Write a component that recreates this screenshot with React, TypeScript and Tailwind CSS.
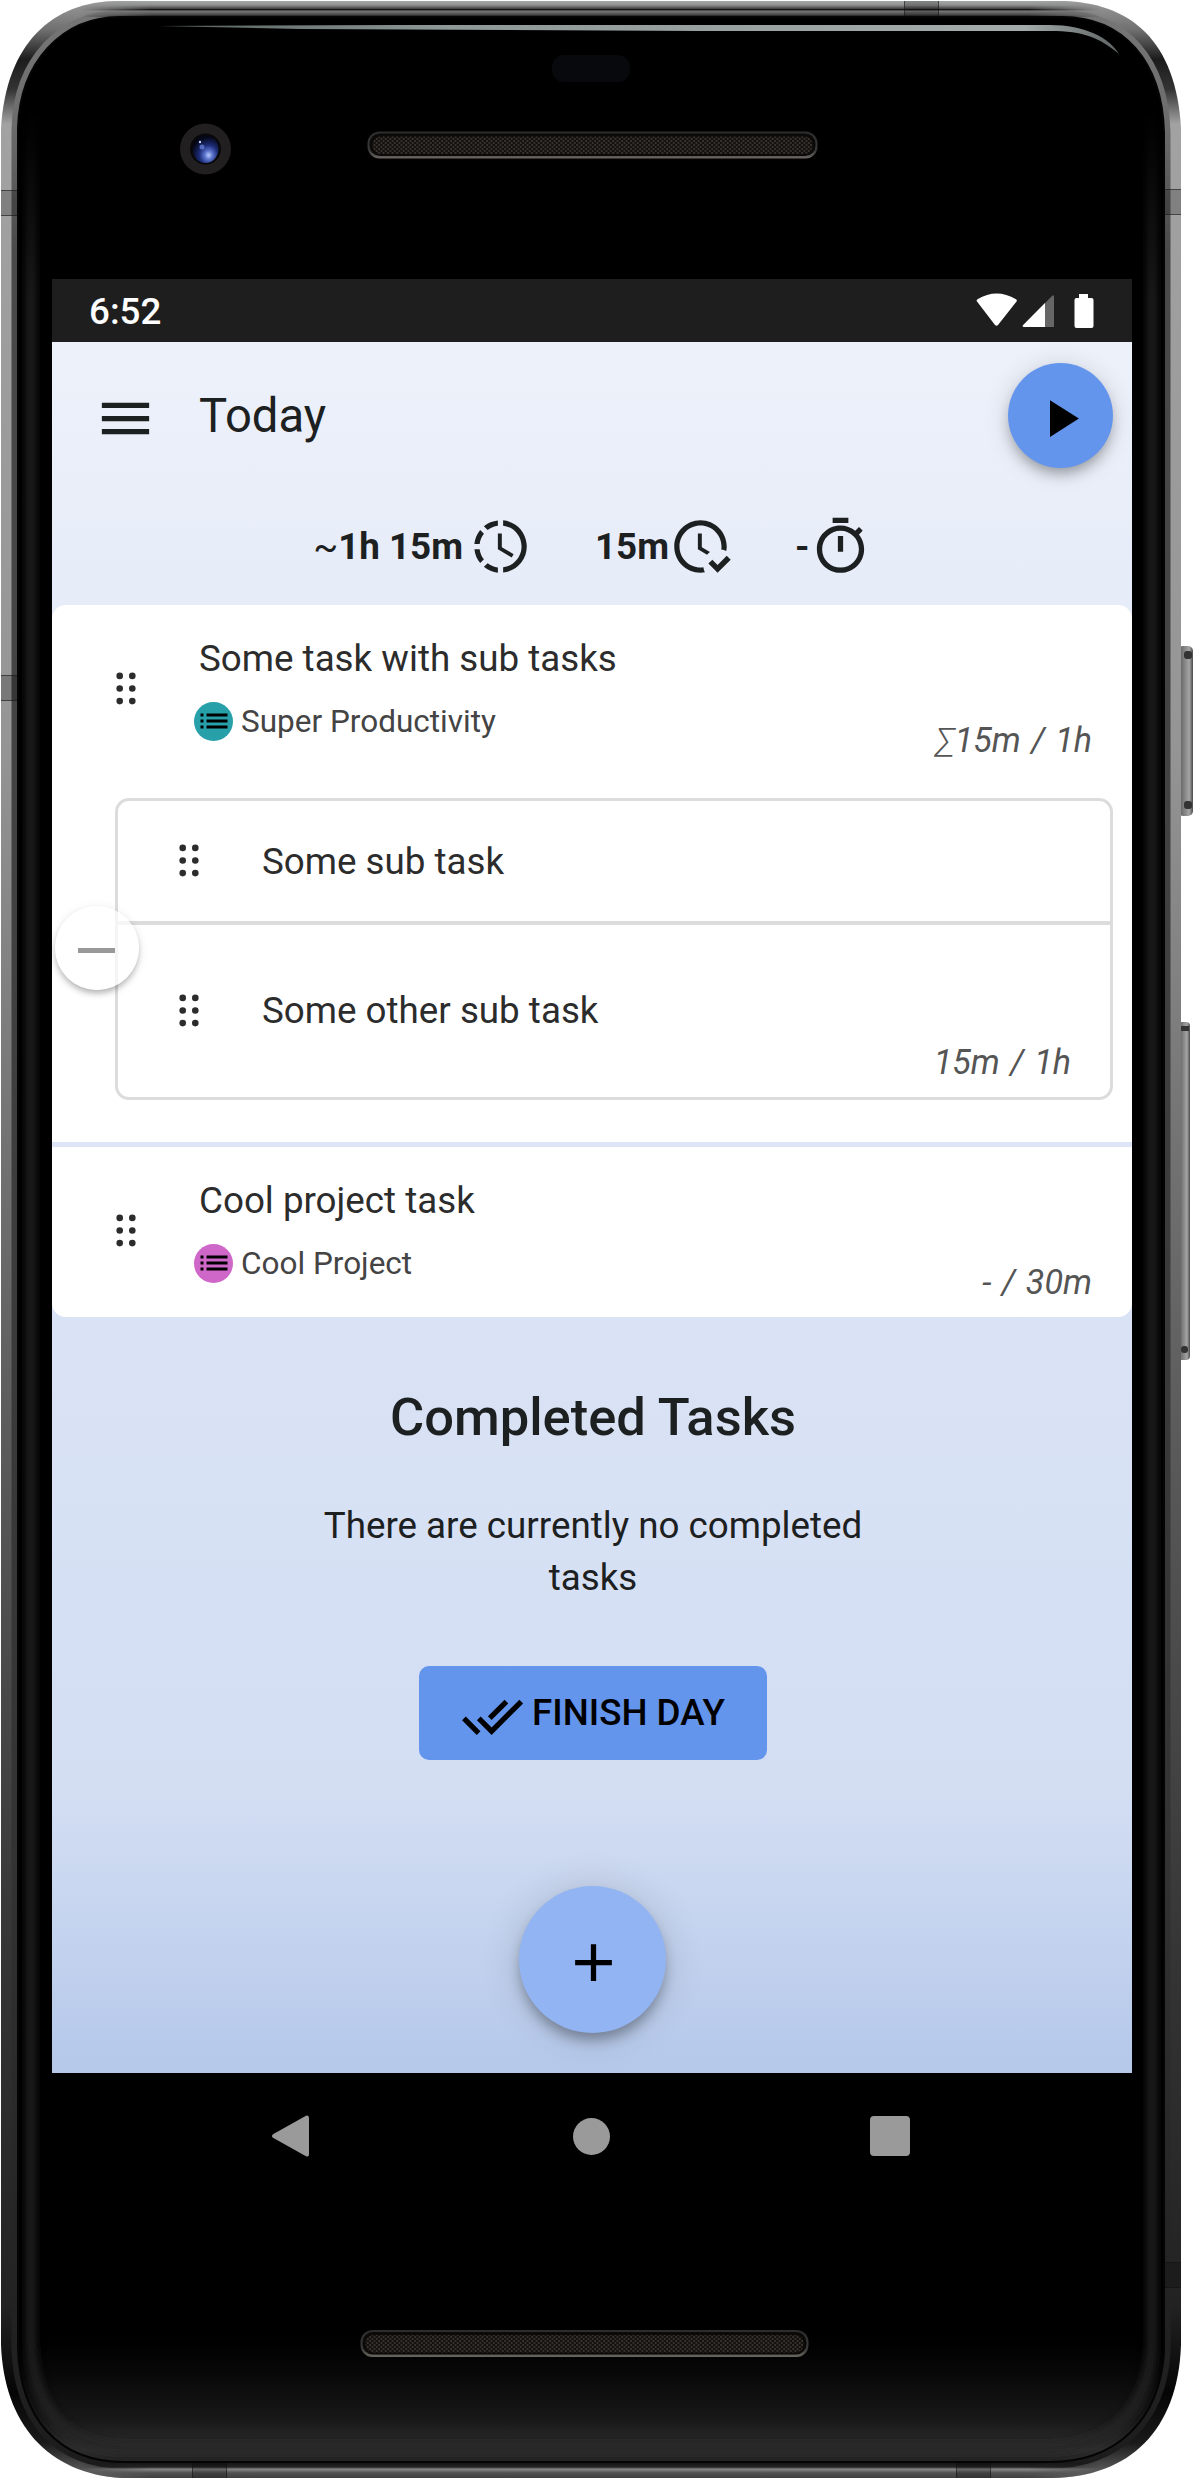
import React from "react";

const FRAME =
  "M118 1H1058C1132 1 1176 42 1181 128V2345C1178 2430 1130 2477 1052 2478H122C48 2474 4 2424 1 2345V128C6 44 52 1 118 1Z";
const GLASS =
  "M120 17H1062C1124 17 1162 62 1164 132V2352C1160 2420 1116 2462 1050 2462H124C58 2462 20 2418 18 2348V128C20 62 62 17 120 17Z";
const GLOW =
  "M122 30H1060C1116 30 1150 70 1152 134V2346C1148 2410 1110 2448 1048 2448H126C66 2448 34 2410 31 2344V134C34 72 68 30 122 30Z";

function Speaker({ y, x, w }: { y: number; x: number; w: number }) {
  return (
    <g>
      <rect x={x} y={y} width={w} height="27" rx="12" fill="url(#slotEdge)" />
      <rect x={x + 2} y={y + 2} width={w - 4} height="22.5" rx="10.5" fill="#0b0a09" />
      <rect x={x + 5} y={y + 5} width={w - 10} height="17.5" rx="8" fill="url(#mesh)" />
    </g>
  );
}

/* Decorative phone body drawn behind the screen. */
function PhoneBody() {
  return (
    <svg className="absolute inset-0" width="1194" height="2480" viewBox="0 0 1194 2480" aria-hidden="true">
      <defs>
        <linearGradient id="metal" x1="0" y1="0" x2="0" y2="2480" gradientUnits="userSpaceOnUse">
          <stop offset="0" stopColor="#9b9b9b" />
          <stop offset="0.012" stopColor="#707070" />
          <stop offset="0.024" stopColor="#1c1c1c" />
          <stop offset="0.036" stopColor="#333333" />
          <stop offset="0.05" stopColor="#a2a2a2" />
          <stop offset="0.3" stopColor="#959595" />
          <stop offset="0.55" stopColor="#606060" />
          <stop offset="0.8" stopColor="#333333" />
          <stop offset="0.93" stopColor="#222222" />
          <stop offset="0.965" stopColor="#050505" />
          <stop offset="0.985" stopColor="#1a1a1a" />
          <stop offset="1" stopColor="#6c6c6c" />
        </linearGradient>
        <linearGradient id="topMetal" x1="0" y1="0" x2="0" y2="17" gradientUnits="userSpaceOnUse">
          <stop offset="0" stopColor="#a8b0ae" />
          <stop offset="0.3" stopColor="#8f8f8f" />
          <stop offset="0.5" stopColor="#444444" />
          <stop offset="0.56" stopColor="#151515" />
          <stop offset="0.66" stopColor="#777777" />
          <stop offset="0.85" stopColor="#4b4b4b" />
          <stop offset="1" stopColor="#050505" />
        </linearGradient>
        <linearGradient id="bottomMetal" x1="0" y1="2462" x2="0" y2="2479" gradientUnits="userSpaceOnUse">
          <stop offset="0" stopColor="#111111" />
          <stop offset="0.3" stopColor="#252525" />
          <stop offset="0.42" stopColor="#888888" />
          <stop offset="0.65" stopColor="#505050" />
          <stop offset="1" stopColor="#3e3e3e" />
        </linearGradient>
        <linearGradient id="innerRim" x1="0" y1="0" x2="0" y2="2480" gradientUnits="userSpaceOnUse">
          <stop offset="0" stopColor="#777777" />
          <stop offset="0.05" stopColor="#6c6c6c" />
          <stop offset="0.1" stopColor="#4a4a4a" />
          <stop offset="0.75" stopColor="#333333" />
          <stop offset="1" stopColor="#1c1c1c" />
        </linearGradient>
        <linearGradient id="glassFill" x1="0" y1="2340" x2="0" y2="2462" gradientUnits="userSpaceOnUse">
          <stop offset="0" stopColor="#000000" />
          <stop offset="0.25" stopColor="#070707" />
          <stop offset="0.65" stopColor="#181818" />
          <stop offset="0.9" stopColor="#2e2e2e" />
          <stop offset="1" stopColor="#232323" />
        </linearGradient>
        <linearGradient id="slotEdge" x1="0" y1="0" x2="0" y2="1">
          <stop offset="0" stopColor="#2c2c2c" />
          <stop offset="0.7" stopColor="#3a3938" />
          <stop offset="1" stopColor="#6b6761" />
        </linearGradient>
        <pattern id="mesh" width="4.5" height="4" patternUnits="userSpaceOnUse">
          <rect width="4.5" height="4" fill="#13100e" />
          <rect x="0.3" y="0.3" width="1.6" height="1.4" fill="#4e4942" />
          <rect x="2.5" y="2.3" width="1.6" height="1.4" fill="#4e4942" />
        </pattern>
        <linearGradient id="shine" x1="160" y1="0" x2="1120" y2="0" gradientUnits="userSpaceOnUse">
          <stop offset="0" stopColor="#56605f" />
          <stop offset="0.3" stopColor="#8e9896" />
          <stop offset="0.9" stopColor="#a3acab" />
          <stop offset="1" stopColor="#5d6262" />
        </linearGradient>
        <linearGradient id="key" x1="0" y1="0" x2="1" y2="0">
          <stop offset="0" stopColor="#555555" />
          <stop offset="0.4" stopColor="#808080" />
          <stop offset="0.75" stopColor="#a5a5a5" />
          <stop offset="1" stopColor="#4a4a4a" />
        </linearGradient>
        <radialGradient id="lens" cx="0.62" cy="0.72" r="0.65">
          <stop offset="0" stopColor="#b9c9ff" />
          <stop offset="0.25" stopColor="#5870c8" />
          <stop offset="0.55" stopColor="#1c2c78" />
          <stop offset="1" stopColor="#050716" />
        </radialGradient>
        <linearGradient id="railFade" x1="80" y1="0" x2="1100" y2="0" gradientUnits="userSpaceOnUse">
          <stop offset="0" stopColor="#000000" />
          <stop offset="0.07" stopColor="#ffffff" />
          <stop offset="0.93" stopColor="#ffffff" />
          <stop offset="1" stopColor="#000000" />
        </linearGradient>
        <linearGradient id="glowFade" x1="0" y1="110" x2="0" y2="300" gradientUnits="userSpaceOnUse">
          <stop offset="0" stopColor="#000000" />
          <stop offset="1" stopColor="#ffffff" />
        </linearGradient>
        <mask id="railMask" maskUnits="userSpaceOnUse" x="0" y="0" width="1194" height="2480">
          <rect width="1194" height="2480" fill="url(#railFade)" />
        </mask>
        <mask id="glowMask" maskUnits="userSpaceOnUse" x="0" y="0" width="1194" height="2480">
          <rect width="1194" height="2480" fill="url(#glowFade)" />
        </mask>
        <clipPath id="frameClip">
          <path d={FRAME} />
        </clipPath>
        <filter id="soft" filterUnits="userSpaceOnUse" x="0" y="0" width="1194" height="2480">
          <feGaussianBlur stdDeviation="4" />
        </filter>
      </defs>
      <rect x="1178" y="646" width="15" height="170" rx="5" fill="url(#key)" />
      <rect x="1184" y="651" width="8" height="8" rx="3" fill="#333333" />
      <rect x="1184" y="801" width="8" height="8" rx="3" fill="#333333" />
      <rect x="1178" y="1022" width="12" height="338" rx="4" fill="url(#key)" />
      <rect x="1181" y="1026" width="8" height="5" fill="#333333" />
      <rect x="1181" y="1346" width="7" height="7" rx="3" fill="#333333" />
      <path d={FRAME} fill="url(#metal)" />
      <path d={GLASS} fill="none" stroke="url(#innerRim)" strokeWidth="13" />
      <g clipPath="url(#frameClip)">
        <g mask="url(#railMask)">
          <rect x="80" y="0" width="1020" height="17" fill="url(#topMetal)" />
          <rect x="80" y="2462" width="1020" height="17" fill="url(#bottomMetal)" />
        </g>
        <g fill="#000000" fillOpacity="0.2" stroke="#111111" strokeOpacity="0.6">
          <rect x="-2" y="190.5" width="24" height="25" />
          <rect x="-2" y="675.5" width="24" height="25" />
          <rect x="1160" y="189.5" width="24" height="25" />
          <rect x="1160" y="2262.5" width="24" height="25" />
          <rect x="904.5" y="-2" width="34" height="24" />
          <rect x="192.5" y="2458" width="34" height="24" />
          <rect x="956.5" y="2458" width="34" height="24" />
        </g>
      </g>
      <path d={GLASS} fill="url(#glassFill)" stroke="#050505" strokeWidth="2" />
      <path
        d={GLOW}
        fill="none"
        stroke="#262626"
        strokeWidth="8"
        filter="url(#soft)"
        mask="url(#glowMask)"
      />
      <path d="M158 26L400 25H1050C1085 25 1110 38 1119 54C1100 38 1084 31 1050 31H700L300 29Z" fill="url(#shine)" />
      <rect x="552" y="55" width="78" height="27" rx="12" fill="#08090d" />
      <circle cx="205.5" cy="149" r="25.5" fill="#211f20" />
      <circle cx="205.5" cy="149" r="15.5" fill="#08080a" />
      <ellipse cx="205.5" cy="149" rx="13" ry="14" fill="url(#lens)" />
      <circle cx="202" cy="147" r="2.5" fill="#6f86e0" fillOpacity="0.7" />
      <circle cx="200" cy="142" r="1.2" fill="#c6d2ff" />
      <Speaker x={367.5} y={131.5} w={450} />
      <Speaker x={360.5} y={2330} w={448} />
    </svg>
  );
}

function Icon({ d, className }: { d: string; className?: string }) {
  return (
    <svg viewBox="0 0 24 24" className={"size-[63px] shrink-0 fill-current " + (className ?? "")}>
      <path d={d} />
    </svg>
  );
}

const MENU = "M3 18h18v-2H3v2zm0-5h18v-2H3v2zm0-7v2h18V6H3z";
const PROGRESS =
  "M13 2.03V2.05L13 4.05C17.39 4.59 20.5 8.58 19.96 12.97C19.5 16.61 16.64 19.5 13 19.93V21.93C18.5 21.38 22.5 16.5 21.95 11C21.5 6.25 17.73 2.5 13 2.03M11 2.06C9.05 2.25 7.19 3 5.67 4.26L7.1 5.74C8.22 4.84 9.57 4.26 11 4.06V2.06M4.26 5.67C3 7.19 2.25 9.04 2.05 11H4.05C4.24 9.58 4.8 8.23 5.69 7.1L4.26 5.67M2.06 13C2.26 14.96 3.03 16.81 4.27 18.33L5.69 16.9C4.81 15.77 4.24 14.42 4.06 13H2.06M7.1 18.37L5.67 19.74C7.18 21 9.04 21.79 11 22V20C9.58 19.82 8.23 19.25 7.1 18.37M12.5 7V12.25L17 14.92L16.25 16.15L11 13V7H12.5Z";
const CLOCK_CHECK =
  "M23.5 17L18.5 22L15 18.5L16.5 17L18.5 19L22 15.5L23.5 17M13.1 19.9C12.7 20 12.4 20 12 20C7.6 20 4 16.4 4 12S7.6 4 12 4 20 7.6 20 12C20 12.4 20 12.7 19.9 13.1C20.6 13.2 21.2 13.4 21.8 13.7C21.9 13.1 22 12.6 22 12C22 6.5 17.5 2 12 2S2 6.5 2 12C2 17.5 6.5 22 12 22C12.6 22 13.2 21.9 13.7 21.8C13.4 21.3 13.2 20.6 13.1 19.9M15.6 14.1L12.5 12.3V7H11V13L14.5 15.1C14.8 14.7 15.2 14.4 15.6 14.1Z";
const TIMER =
  "M15 1H9v2h6V1zm-4 13h2V8h-2v6zm8.03-6.61l1.42-1.42c-.43-.51-.9-.99-1.41-1.41l-1.42 1.42C16.07 4.74 14.12 4 12 4c-4.97 0-9 4.03-9 9s4.02 9 9 9 9-4.03 9-9c0-2.12-.74-4.07-1.97-5.61zM12 20c-3.87 0-7-3.13-7-7s3.13-7 7-7 7 3.13 7 7-3.13 7-7 7z";
const DONE_ALL =
  "M18 7l-1.41-1.41-6.34 6.34 1.41 1.41L18 7zm4.24-1.41L11.66 16.17 7.48 12l-1.41 1.41L11.66 19l12-12-1.42-1.41zM.41 13.41L6 19l1.41-1.41L1.83 12 .41 13.41z";
const LIST =
  "M3 13h2v-2H3v2zm0 4h2v-2H3v2zm0-8h2V7H3v2zm4 4h14v-2H7v2zm0 4h14v-2H7v2zM7 7v2h14V7H7z";

function Handle({ className }: { className: string }) {
  return (
    <svg viewBox="0 0 20 33" className={"h-[33px] w-5 shrink-0 fill-[#2c2c2c] " + className}>
      {[3.9, 16.5, 29.1].map((y) => (
        <React.Fragment key={y}>
          <circle cx="3.7" cy={y} r="3.3" />
          <circle cx="16.3" cy={y} r="3.3" />
        </React.Fragment>
      ))}
    </svg>
  );
}

function TaskRow({
  title,
  project,
  chip,
  time,
}: {
  title: string;
  project: string;
  chip: string;
  time: React.ReactNode;
}) {
  return (
    <div className="flex h-[170px] items-start">
      <Handle className="mt-[67px] ml-16" />
      <div className="ml-[58px] flex flex-col items-start">
        <div className="mt-[28px] ml-[5px] h-[52px] text-[36.75px] leading-[52px] text-[#2c2c2c]">{title}</div>
        <div className="mt-[17px] flex h-[39px] items-center">
          <span className={"flex size-[39px] items-center justify-center rounded-full " + chip}>
            <svg viewBox="0 0 24 24" className="mb-px size-9 fill-black">
              <path d={LIST} />
            </svg>
          </span>
          <span className="ml-[8px] text-[31.5px] leading-[39px] text-[#444444]">{project}</span>
        </div>
      </div>
      <div className="mt-[115px] mr-[40px] ml-auto text-[34.1px] leading-[40px] text-[#555555] italic [word-spacing:2px]">
        {time}
      </div>
    </div>
  );
}

export default function App() {
  return (
    <div className="relative h-[2480px] w-[1194px] overflow-hidden bg-white font-['Roboto',sans-serif]">
      <PhoneBody />
      <div className="relative ml-[52px] flex w-[1080px] flex-col pt-[279px]">
        <div className="flex h-[63px] items-center bg-[#1e1e1e] pl-[37px] text-white">
          <span className="mt-[4px] text-[36.75px] leading-none font-medium">6:52</span>
          <svg viewBox="0 0 120 36" className="mr-[36px] ml-auto h-9 w-[120px] fill-white">
            <path d="M1 8.5Q0 7.5 1.5 6.2Q20.500 -5 40 6.200Q41.500 7.500 40.500 8.500L22 32Q20.500 33.500 19 32Z" />
            <path d="M78 34V4Q78 1 75.800 3.200L47 32.300Q46.500 34 48 34Z" fill="#666666" />
            <path d="M69 34V10L47 32.300Q46 34 48 34Z" />
            <path d="M103 1h9v4h3.500q2 0 2 2v26q0 2-2 2h-15q-2 0-2-2V7q0-2 2-2H103Z" />
          </svg>
        </div>

        <div className="flex h-[1731px] flex-col bg-[linear-gradient(to_bottom,#edf1fa_0px,#e6ecf8_263px,#dde5f6_800px,#d3def3_1450px,#b5c8ea_1731px)] text-[#1d2021]">
          <header className="flex h-[147px] items-center">
            <Icon d={MENU} className="mt-[6px] ml-[42px]" />
            <h1 className="mt-[2px] ml-[42px] text-[47.25px] leading-none">Today</h1>
            <button className="mr-[19px] ml-auto flex size-[105px] items-center justify-center rounded-full bg-[#6495ed] shadow-[0_8px_13px_-3px_rgba(0,0,0,0.3),0_3px_26px_rgba(0,0,0,0.14)]">
              <svg viewBox="0 0 24 24" className="mt-[6px] size-[63px] fill-black">
                <path d="M8 5v14l11-7z" />
              </svg>
            </button>
          </header>

          <div className="flex h-[116px] items-start text-[36.75px] leading-[63px] font-bold">
            <span className="mt-[26px] ml-[262px] flex w-[218px] justify-end">
              <span className="mr-[6px] whitespace-nowrap">
                <span className="font-normal">~</span>1h 15m
              </span>
              <Icon d={PROGRESS} />
            </span>
            <span className="mt-[26px] ml-[63px] flex">
              <span>15m</span>
              <Icon d={CLOCK_CHECK} />
            </span>
            <span className="mt-[26px] ml-[63px] flex">
              <span>-</span>
              <Icon d={TIMER} className="-ml-px" />
            </span>
          </div>

          <main className="flex flex-col gap-[5px]">
            <section className="relative h-[537px] rounded-t-[14px] bg-white">
              <TaskRow
                title="Some task with sub tasks"
                project="Super Productivity"
                chip="bg-[#27a0aa]"
                time={
                  <>
                    <span className="font-light">∑</span>15m / 1h
                  </>
                }
              />
              <div className="mt-[23px] ml-[63px] h-[302px] w-[998px] rounded-[14px] border-3 border-[#dcdcdc]">
                <div className="flex h-[124px] items-start border-b-4 border-[#dcdcdc] text-[36.75px] leading-[52px] text-[#2c2c2c]">
                  <Handle className="mt-[43px] ml-[61px]" />
                  <span className="mt-[35px] ml-[63px]">Some sub task</span>
                </div>
                <div className="flex h-[172px] items-start text-[36.75px] leading-[52px] text-[#2c2c2c]">
                  <Handle className="mt-[69px] ml-[61px]" />
                  <span className="mt-[60px] ml-[63px]">Some other sub task</span>
                  <span className="mt-[117px] mr-[39px] ml-auto text-[34.1px] leading-[40px] text-[#555555] italic [word-spacing:2px]">
                    15m / 1h
                  </span>
                </div>
              </div>
              <button className="absolute top-[301px] left-[3px] flex size-[84px] items-center justify-center rounded-full bg-white/70 shadow-[0_4px_6px_-1px_rgba(0,0,0,0.28),0_2px_12px_rgba(0,0,0,0.08)]">
                <span className="mt-[5px] mr-[2px] h-[5px] w-[37px] bg-[#999999]" />
              </button>
            </section>
            <section className="h-[170px] rounded-b-[14px] bg-white">
              <TaskRow title="Cool project task" project="Cool Project" chip="bg-[#cf67c9]" time="- / 30m" />
            </section>
          </main>

          <h2 className="mt-[70px] ml-[2px] text-center text-[52.5px] leading-[60px] font-medium">Completed Tasks</h2>
          <p className="mt-[53px] ml-[261px] w-[560px] text-center text-[36.75px] leading-[52px]">
            There are currently no completed tasks
          </p>
          <button className="mt-[62px] ml-[367px] flex h-[94px] w-[348px] items-center rounded-[10px] bg-[#6495ed] pl-[42px] text-[36.75px] font-medium text-black">
            <Icon d={DONE_ALL} className="mt-[6px]" />
            <span className="ml-[8px] whitespace-nowrap">FINISH DAY</span>
          </button>
          <button className="mt-[126px] ml-[467px] flex size-[147px] items-center justify-center rounded-full bg-[#93b4f2] shadow-[0_9px_13px_-2px_rgba(0,0,0,0.32),0_3px_40px_rgba(0,0,0,0.14)]">
            <svg viewBox="0 0 24 24" className="mt-[6px] ml-px size-[63px] fill-black">
              <path d="M19 13h-6v6h-2v-6H5v-2h6V5h2v6h6v2z" />
            </svg>
          </button>
        </div>

        <nav className="flex h-[126px] items-center bg-black text-[#9a9a9a]">
          <svg viewBox="0 0 38 42" className="ml-[220px] h-[42px] w-[38px] fill-current">
            <path d="M1 19.200L34 .800Q37 -.500 37 3V39Q37 42.500 34 41.200L1 22.800Q-1 21 1 19.200Z" />
          </svg>
          <span className="ml-[263px] size-[37px] rounded-full bg-current" />
          <span className="ml-[260px] size-10 rounded bg-current" />
        </nav>
      </div>
    </div>
  );
}
